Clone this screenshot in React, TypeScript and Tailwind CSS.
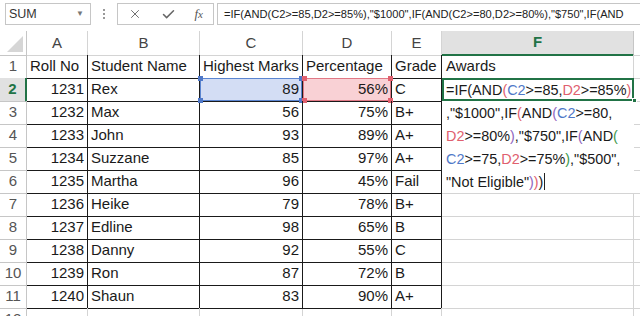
import { X, Check } from 'lucide-react';

const rows = [
  ['1231', 'Rex', '89', '56%', 'C'],
  ['1232', 'Max', '56', '75%', 'B+'],
  ['1233', 'John', '93', '89%', 'A+'],
  ['1234', 'Suzzane', '85', '97%', 'A+'],
  ['1235', 'Martha', '96', '45%', 'Fail'],
  ['1236', 'Heike', '79', '78%', 'B+'],
  ['1237', 'Edline', '98', '65%', 'B'],
  ['1238', 'Danny', '92', '55%', 'C'],
  ['1239', 'Ron', '87', '72%', 'B'],
  ['1240', 'Shaun', '83', '90%', 'A+'],
];

const cols = 'grid grid-cols-[27px_61px_112px_103px_89px_50px_192px_6px]';

// colours for the formula being edited
const K = 'text-[#1a1a1a]';
const BLUE = 'text-[#4f78c8]';
const RED = 'text-[#e0606e]';
const P2 = 'text-[#e0606e]';
const P3 = 'text-[#9066c0]';
const P4 = 'text-[#3d9a4c]';

const formulaLines: [string, string][][] = [
  [['=IF(AND', K], ['(', P2], ['C2', BLUE], ['>=85,', K], ['D2', RED], ['>=85%', K], [')', P2]],
  [[',"$1000",IF', K], ['(', P2], ['AND', K], ['(', P3], ['C2', BLUE], ['>=80,', K]],
  [['D2', RED], ['>=80%', K], [')', P3], [',"$750",IF', K], ['(', P3], ['AND', K], ['(', P4]],
  [['C2', BLUE], ['>=75,', K], ['D2', RED], ['>=75%', K], [')', P4], [',"$500",', K]],
  [['"Not Eligible"', K], [')', P3], [')', P2], [')', K]],
];

function Corner({ pos, color }: { pos: string; color: string }) {
  return <span className={`absolute w-[5px] h-[5px] ${pos} ${color}`} />;
}

export default function App() {
  return (
    <div className="w-[640px] h-[316px] overflow-hidden bg-white font-['Liberation_Sans',Arial,sans-serif] text-[#1a1a1a]">
      {/* formula bar */}
      <div className="h-[31px] flex items-start pt-[3px] pl-[5px]">
        <div className="w-[86px] h-[22px] border border-[#c6c6c6] flex items-center pl-[3px] pr-[6px] text-[12.5px] text-[#333]">
          <span className="flex-1">SUM</span>
          <span className="text-[8px] text-[#777]">▼</span>
        </div>
        <div className="w-[26px] h-[22px] flex flex-col items-center justify-center gap-[2px]">
          <span className="w-[2px] h-[2px] bg-[#999]" />
          <span className="w-[2px] h-[2px] bg-[#999]" />
          <span className="w-[2px] h-[2px] bg-[#999]" />
        </div>
        <div className="w-[97px] h-[22px] border border-[#c6c6c6] flex items-center justify-between pl-[10px] pr-[10px] text-[#666]">
          <X className="w-[14px] h-[14px]" strokeWidth={1.6} />
          <Check className="w-[15px] h-[15px]" strokeWidth={2.4} />
          <span className="font-['Liberation_Serif',serif] italic text-[13px] text-[#555]">f<span className="text-[11px]">x</span></span>
        </div>
        <div className="ml-[3px] flex-1 h-[22px] border border-r-0 border-[#c6c6c6] flex items-center pl-[6px] overflow-hidden whitespace-nowrap text-[11.1px] text-[#222]">
          =IF(AND(C2&gt;=85,D2&gt;=85%),"$1000",IF(AND(C2&gt;=80,D2&gt;=80%),"$750",IF(AND
        </div>
      </div>

      {/* grid */}
      <div className="relative">
        {/* column headers */}
        <div className={`${cols} h-[24px] text-[15px] text-[#444]`}>
          <div className="relative border-r border-b border-[#c6c6c6] overflow-hidden">
            <span className="absolute right-[3px] bottom-[3px] w-0 h-0 border-b-[16px] border-l-[16px] border-b-[#d6d6d6] border-l-transparent" />
          </div>
          {['A', 'B', 'C', 'D', 'E'].map((c) => (
            <div key={c} className="flex items-center justify-center border-r border-b border-[#d4d4d4]">
              {c}
            </div>
          ))}
          <div className="flex items-center justify-center bg-[#e1e1e1] border-r border-[#c6c6c6] border-b-2 border-b-[#217346] text-[#217346] font-bold">
            F
          </div>
          <div className="border-b border-[#d4d4d4]" />
        </div>

        {/* row 1 */}
        <div className={`${cols} h-[23px] text-[15px]`}>
          <div className="flex items-center justify-center border-r border-b border-[#c6c6c6] text-[#555]">1</div>
          <div className="flex items-center px-[3px] border-r border-b border-[#1a1a1a]">Roll No</div>
          <div className="flex items-center px-[3px] border-r border-b border-[#1a1a1a]">Student Name</div>
          <div className="flex items-center px-[3px] border-r border-b border-[#1a1a1a] whitespace-nowrap">Highest Marks</div>
          <div className="flex items-center px-[3px] border-r border-b border-[#1a1a1a]">Percentage</div>
          <div className="flex items-center px-[3px] border-r border-b border-[#1a1a1a]">Grade</div>
          <div className="flex items-center px-[4px] border-r border-b border-[#d4d4d4]">Awards</div>
          <div className="border-b border-[#d4d4d4]" />
        </div>

        {/* data rows */}
        {rows.map((r, i) => {
          const n = i + 2;
          const active = n === 2;
          return (
            <div key={n} className={`${cols} h-[23px] text-[15px]`}>
              <div
                className={
                  active
                    ? 'flex items-center justify-center bg-[#e1e1e1] border-r-2 border-r-[#217346] border-b border-b-[#c6c6c6] text-[#217346] font-bold'
                    : 'flex items-center justify-center border-r border-b border-[#c6c6c6] text-[#555]'
                }
              >
                {n}
              </div>
              <div className="flex items-center justify-end px-[3px] border-r border-b border-[#1a1a1a]">{r[0]}</div>
              <div className="flex items-center px-[3px] border-r border-b border-[#1a1a1a]">{r[1]}</div>
              <div
                className={`relative flex items-center justify-end px-[3px] border-r border-b border-[#1a1a1a] ${
                  active ? 'bg-[#d3ddf4]' : ''
                }`}
              >
                {active && (
                  <>
                    <span className="absolute inset-0 border border-[#5b85d0]" />
                    <Corner pos="-left-[2px] -top-[2px]" color="bg-[#4f78c8]" />
                    <Corner pos="-right-[2px] -top-[2px]" color="bg-[#4f78c8]" />
                    <Corner pos="-left-[2px] -bottom-[2px]" color="bg-[#4f78c8]" />
                    <Corner pos="-right-[2px] -bottom-[2px]" color="bg-[#4f78c8]" />
                  </>
                )}
                <span className="relative">{r[2]}</span>
              </div>
              <div
                className={`relative flex items-center justify-end px-[3px] border-r border-b border-[#1a1a1a] ${
                  active ? 'bg-[#f9d1d5]' : ''
                }`}
              >
                {active && (
                  <>
                    <span className="absolute inset-0 border border-[#e07885]" />
                    <Corner pos="-left-[1px] -top-[2px]" color="bg-[#e0606e]" />
                    <Corner pos="-right-[2px] -top-[2px]" color="bg-[#e0606e]" />
                    <Corner pos="-left-[1px] -bottom-[2px]" color="bg-[#e0606e]" />
                    <Corner pos="-right-[2px] -bottom-[2px]" color="bg-[#e0606e]" />
                  </>
                )}
                <span className="relative">{r[3]}</span>
              </div>
              <div className="flex items-center px-[3px] border-r border-b border-[#1a1a1a]">{r[4]}</div>
              <div className="border-r border-b border-[#d4d4d4]" />
              <div className="border-b border-[#d4d4d4]" />
            </div>
          );
        })}

        {/* row 12 (cut off) */}
        <div className={`${cols} h-[23px] text-[15px]`}>
          <div className="flex items-center justify-center border-r border-[#c6c6c6] text-[#555]">12</div>
          <div className="border-r border-[#d4d4d4]" />
          <div className="border-r border-[#d4d4d4]" />
          <div className="border-r border-[#d4d4d4]" />
          <div className="border-r border-[#d4d4d4]" />
          <div className="border-r border-[#d4d4d4]" />
          <div className="border-r border-[#d4d4d4]" />
          <div />
        </div>

        {/* in-cell editor over F2:F6 */}
        <div className="absolute left-[442px] top-[47px] w-[192px] h-[115px] bg-white">
          <div className="absolute left-0 top-0 w-[192px] h-[23px] border-2 border-[#217346]" />
          <span className="absolute right-[-3px] top-[20px] w-[5px] h-[5px] bg-[#217346] border border-white" />
          <div className="relative pl-[4px] pt-[1px] text-[14.4px] leading-[23px] whitespace-nowrap">
            {formulaLines.map((line, li) => (
              <div key={li} className="h-[23px]">
                {line.map(([t, c], si) => (
                  <span key={si} className={c}>
                    {t}
                  </span>
                ))}
                {li === formulaLines.length - 1 && (
                  <span className="inline-block w-[1px] h-[17px] bg-[#222] align-[-3px] ml-[1px]" />
                )}
              </div>
            ))}
          </div>
        </div>
      </div>
    </div>
  );
}
